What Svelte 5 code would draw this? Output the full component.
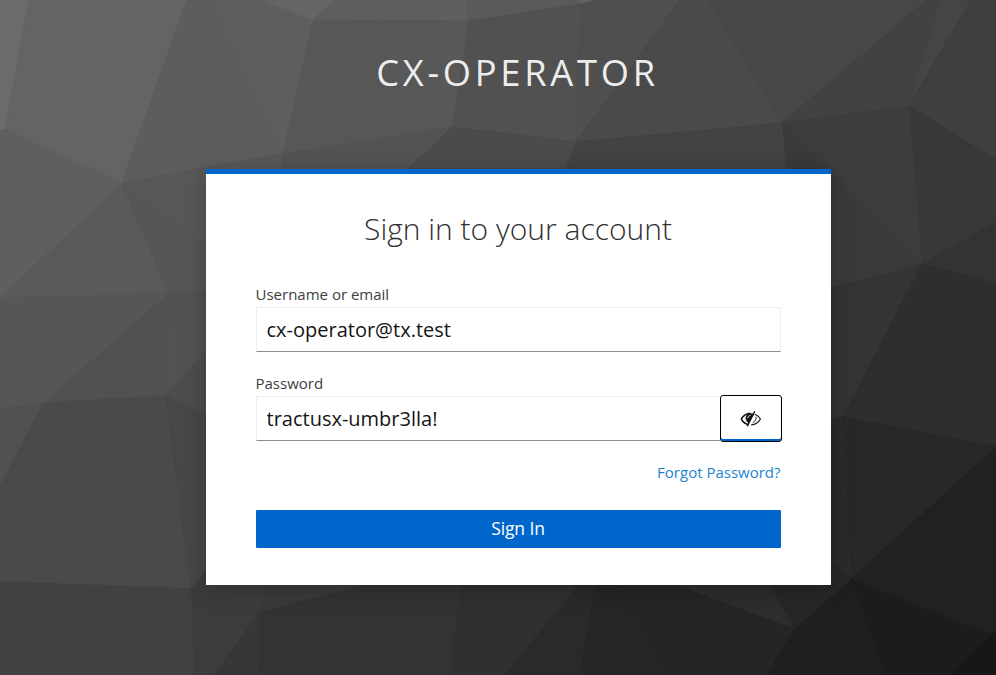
<script>
  let username = $state('cx-operator@tx.test');
  let password = $state('tractusx-umbr3lla!');

  const facets = [
    ['0,0 29,0 5,130 0,131', '#6b6b6b'],
    ['29,0 187,0 122,183 5,130', '#646464'],
    ['187,0 210,0 283,154 122,183', '#5d5d5d'],
    ['210,0 261,0 313,20 283,154', '#5e5e5e'],
    ['261,0 335,0 313,20', '#656565'],
    ['335,0 467,0 469,21 313,20', '#5e5e5e'],
    ['467,0 577,0 581,4 469,21', '#5a5a5a'],
    ['577,0 598,0 581,4', '#606060'],
    ['313,20 469,21 452,127', '#585858'],
    ['313,20 452,127 283,154', '#575757'],
    ['469,21 581,4 576,142 452,127', '#515151'],
    ['581,4 598,0 680,0 576,142', '#4f4f4f'],
    ['680,0 709,0 782,123 576,142', '#4a4a4a'],
    ['709,0 927,0 782,123', '#474747'],
    ['927,0 940,0 909,106 782,123', '#424242'],
    ['940,0 971,0 909,106', '#454545'],
    ['971,0 996,0 996,160 909,106', '#3f3f3f'],
    ['909,106 996,160 996,222 922,264', '#383838'],
    ['782,123 909,106 922,264', '#3d3d3d'],
    ['782,123 922,264 831,288 786,175', '#3a3a3a'],
    ['996,222 996,284 922,264', '#333333'],
    ['922,264 831,288 831,419 843,417', '#343434'],
    ['922,264 996,284 996,447 843,417', '#2e2e2e'],
    ['843,417 996,447 851,579', '#282828'],
    ['831,419 843,417 851,579 831,563', '#2b2b2b'],
    ['996,447 996,633 991,635 851,579', '#212121'],
    ['851,579 991,635 952,675 885,675', '#1c1c1c'],
    ['991,635 996,632 996,675 952,675', '#171717'],
    ['851,579 885,675 766,675 794,629', '#1f1f1f'],
    ['794,629 851,579 831,563 770,585', '#272727'],
    ['675,585 770,585 794,629', '#2d2d2d'],
    ['617,585 675,585 794,629 766,675 665,675', '#252525'],
    ['595,585 617,585 665,675 579,675', '#262626'],
    ['578,585 595,585 579,675 504,675', '#2a2a2a'],
    ['461,585 578,585 504,675 449,675', '#303030'],
    ['260,611 364,585 461,585 449,675 259,675', '#333333'],
    ['260,611 265,585 364,585', '#3b3b3b'],
    ['191,588 206,569 265,585 260,611', '#3d3d3d'],
    ['191,588 260,611 215,675 194,675', '#3c3c3c'],
    ['260,611 259,675 215,675', '#373737'],
    ['0,581 191,588 194,675 0,675', '#414141'],
    ['0,409 44,402 0,487', '#505050'],
    ['44,402 166,395 191,588 0,581 0,487', '#4a4a4a'],
    ['166,395 206,414 206,569 191,588', '#474747'],
    ['166,395 206,350 206,414', '#4d4d4d'],
    ['169,293 206,290 206,350 166,395', '#525252'],
    ['169,293 166,395 44,402', '#515151'],
    ['0,298 169,293 44,402 0,409', '#565656'],
    ['0,298 122,183 169,293', '#5a5a5a'],
    ['0,131 5,130 122,183 0,298', '#5f5f5f'],
    ['122,183 206,243 206,290 169,293', '#565656'],
    ['122,183 283,154 281,175 206,243', '#585858'],
    ['283,154 452,127 402,175 281,175', '#535353'],
    ['452,127 576,142 564,175 402,175', '#4b4b4b'],
    ['576,142 782,123 786,175 564,175', '#434343']
  ];
</script>

<div class="page">
  <svg class="backdrop" viewBox="0 0 996 675" aria-hidden="true">
    {#each facets as [points, shade]}
      <polygon {points} fill={shade} stroke={shade} stroke-width="0.7" />
    {/each}
  </svg>
  <header>CX-OPERATOR</header>
  <main>
    <h1>Sign in to your account</h1>
    <form onsubmit={(e) => e.preventDefault()}>
      <label for="username">Username or email</label>
      <input id="username" type="text" bind:value={username} spellcheck="false" />
      <label for="password">Password</label>
      <div class="group">
        <input id="password" type="text" bind:value={password} spellcheck="false" />
        <button class="toggle" type="button" aria-label="Hide password">
          <svg width="22" height="18" viewBox="0 0 22 18" fill="none" stroke="#151515">
            <path d="M1.2 9C3.1 5.8 6.3 3.4 10.2 3.2M1.2 9C3 12 5.7 14 8.7 14.7" stroke-width="1.5" />
            <path d="M14.8 4.2C17.4 5.1 19.3 6.8 20.4 9C18.6 12.3 15.2 14.7 11.2 14.8" stroke-width="1.2" />
            <path d="M10.8 3.2C6.8 3.6 5.2 6.3 5.7 9.1C6 11 7.3 12.5 8.7 13.1L14.2 3.7Z" fill="#151515" stroke="none" />
            <path d="M14.7 1.4L7.3 16.2" stroke-width="1.4" />
            <path d="M7.7 8.2C7.8 6.6 8.9 5.6 10.5 5.4" stroke="#fff" stroke-width="0.9" />
            <path d="M16 6.6C16.7 9 15.2 11.4 12.8 12.6" stroke-width="0.9" />
          </svg>
        </button>
      </div>
      <div class="options"><a href="#reset">Forgot Password?</a></div>
      <button class="submit" type="submit">Sign In</button>
    </form>
  </main>
</div>

<style>
  :global(body) { margin: 0; }
  .page {
    position: relative;
    width: 996px;
    height: 675px;
    overflow: hidden;
    box-sizing: border-box;
    padding-left: 206px;
    background: #333;
    font-family: "Open Sans", sans-serif;
  }
  .backdrop { position: absolute; inset: 0; width: 996px; height: 675px; }
  header {
    position: relative;
    width: 625px;
    height: 169px;
    box-sizing: border-box;
    padding: 47px 2px 0 0;
    text-align: center;
    font-size: 36.25px;
    line-height: 50px;
    letter-spacing: 3.75px;
    color: #ededed;
  }
  main {
    position: relative;
    box-sizing: border-box;
    width: 625px;
    height: 416px;
    padding: 30px 50px 0;
    background: #fff;
    border-top: 5px solid #06c;
    box-shadow: 0 5px 22px rgba(3, 3, 3, 0.24);
  }
  h1 {
    margin: 0 1px 36px 0;
    text-align: center;
    font-size: 30px;
    font-weight: 300;
    line-height: 50px;
    color: #303030;
  }
  form { display: flex; flex-direction: column; }
  label { height: 17px; margin-left: -0.5px; line-height: 9px; font-size: 15px; color: #3d3d3d; }
  input {
    box-sizing: border-box;
    width: 100%;
    height: 45px;
    margin: 0 0 27px;
    padding: 0 10px 0 9.5px;
    border: 1px solid #ededed;
    border-bottom-color: #8a8d90;
    border-radius: 0;
    outline: none;
    background: #fff;
    color: #151515;
    font: 400 20px "Open Sans", sans-serif;
  }
  .group { display: flex; height: 45px; }
  .group input { flex: 1; min-width: 0; margin: 0; border-right: 0; }
  .toggle {
    box-sizing: border-box;
    width: 62px;
    height: 47px;
    margin: -1px -1px 0 0;
    padding: 0;
    display: flex;
    align-items: center;
    justify-content: center;
    background: #fff;
    border: 1px solid #000;
    border-radius: 3px;
    box-shadow: inset 0 -2px #06c;
  }
  .toggle svg { margin-right: 1px; }
  .options { height: 69px; padding: 20px 0.5px 0 0; box-sizing: border-box; text-align: right; line-height: 23px; font-size: 15px; }
  a { color: #1b84cd; text-decoration: none; }
  .submit {
    height: 38px;
    padding: 0 1px 2px 0;
    border: 0;
    border-radius: 1px;
    background: #06c;
    color: #fff;
    font: 500 17.5px/36px "Open Sans", sans-serif;
    letter-spacing: -0.1px;
  }
</style>
